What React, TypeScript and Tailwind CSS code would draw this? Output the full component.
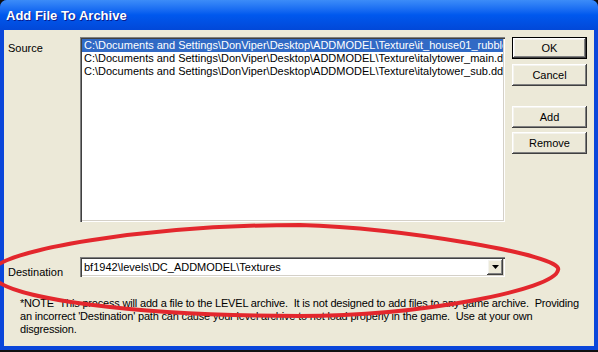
import React from 'react'

const files = [
  'C:\\Documents and Settings\\DonViper\\Desktop\\ADDMODEL\\Texture\\it_house01_rubble.dds',
  'C:\\Documents and Settings\\DonViper\\Desktop\\ADDMODEL\\Texture\\italytower_main.dds',
  'C:\\Documents and Settings\\DonViper\\Desktop\\ADDMODEL\\Texture\\italytower_sub.dds',
]

const raised =
  'shadow-[inset_-1px_-1px_0_#404040,inset_1px_1px_0_#ffffff,inset_-2px_-2px_0_#808080,inset_2px_2px_0_#f4f3ee]'
const sunken =
  'shadow-[inset_1px_1px_0_#808080,inset_2px_2px_0_#404040,inset_-1px_-1px_0_#ffffff,inset_-2px_-2px_0_#d4d0c8]'

function Button({ label, isDefault }: { label: string; isDefault?: boolean }) {
  return (
    <div className={`h-[22px] w-[75px] ${isDefault ? 'border border-black' : ''}`}>
      <div className={`h-full w-full bg-[#ece9d8] ${raised} flex items-center justify-center text-[11px] text-black`}>
        {label}
      </div>
    </div>
  )
}

export default function App() {
  return (
    <div className="relative w-[598px] h-[352px] overflow-hidden bg-[#101010] font-['Liberation_Sans',Arial,sans-serif]">
      <div className="h-[350px] flex flex-col bg-[#0a46da] rounded-t-[7px]">
        {/* title bar */}
        <div className="h-[30px] shrink-0 rounded-t-[7px] bg-gradient-to-b from-[#3c8cf8] via-[#0058ee] to-[#0248d8] flex items-center pl-[6px] pt-[1px]">
          <span className="text-[13px] font-bold text-white [text-shadow:1px_1px_0_#0a1a8a]">
            Add File To Archive
          </span>
        </div>

        {/* body */}
        <div className="flex-1 mx-[4px] mb-[4px] bg-[#ece9d8] text-[11px] text-black pt-[7px]">
          <div className="flex">
            <div className="w-[76px] pl-[4px] pt-[5px] leading-[13px]">Source</div>
            <div className={`w-[425px] h-[185px] bg-white ${sunken} p-[2px] overflow-hidden`}>
              {files.map((f, i) => (
                <div
                  key={f}
                  className={`h-[13px] leading-[13px] pl-[2px] whitespace-nowrap overflow-hidden ${
                    i === 0 ? 'bg-[#316ac5] text-white' : ''
                  }`}
                >
                  {f}
                </div>
              ))}
            </div>
            <div className="ml-[7px] flex flex-col">
              <Button label="OK" isDefault />
              <div className="mt-[5px]">
                <Button label="Cancel" />
              </div>
              <div className="mt-[20px]">
                <Button label="Add" />
              </div>
              <div className="mt-[4px]">
                <Button label="Remove" />
              </div>
            </div>
          </div>

          <div className="flex items-start mt-[35px]">
            <div className="w-[76px] pl-[4px] pt-[9px] leading-[13px]">Destination</div>
            <div className={`w-[425px] h-[20px] bg-white ${sunken} p-[2px] flex items-center`}>
              <span className="flex-1 pl-[2px] whitespace-nowrap">bf1942\levels\DC_ADDMODEL\Textures</span>
              <div className={`w-[16px] h-[16px] bg-[#ece9d8] ${raised} flex items-center justify-center`}>
                <svg width="7" height="4" viewBox="0 0 7 4">
                  <path d="M0 0H7L3.5 4Z" fill="#000" />
                </svg>
              </div>
            </div>
          </div>

          <div className="mt-[18px] pl-[16px] leading-[13px] whitespace-pre tracking-[-0.18px]">
            <div>*NOTE  This process will add a file to the LEVEL archive.  It is not designed to add files to any game archive.  Providing</div>
            <div>an incorrect 'Destination' path can cause your level archive to not load properly in the game.  Use at your own</div>
            <div>disgression.</div>
          </div>
        </div>
      </div>

      {/* red marker ellipse drawn over the screenshot */}
      <svg className="absolute inset-0 pointer-events-none" width="598" height="352" viewBox="0 0 598 352">
        <path
          d="M-8 272 C-5 250 150 225 300 225 C400 228 565 255 558 270 C555 290 420 316 300 316 C150 316 -10 300 -8 272 Z"
          fill="none"
          stroke="#e3272d"
          strokeWidth="4"
        />
      </svg>
    </div>
  )
}
